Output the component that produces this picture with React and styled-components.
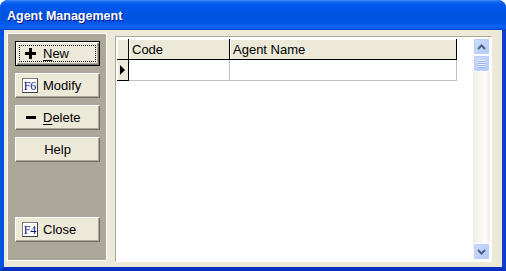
import React from 'react'
import styled, { createGlobalStyle } from 'styled-components'

const GlobalStyle = createGlobalStyle`
  body {
    margin: 0;
    background: #fff;
    font-family: "Liberation Sans", Arial, sans-serif;
  }
`

const Window = styled.div`
  width: 506px;
  height: 271px;
  display: flex;
  flex-direction: column;
  border-radius: 8px 8px 0 0;
  overflow: hidden;
  background: #0054e3;
`

const TitleBar = styled.div`
  height: 30px;
  flex: none;
  display: flex;
  align-items: center;
  padding: 1px 0 0 7px;
  box-sizing: border-box;
  color: #fff;
  font-family: "Liberation Sans", Arial, sans-serif;
  font-weight: bold;
  font-size: 12.5px;
  text-shadow: 1px 1px #0a1883;
  background: linear-gradient(
    to bottom,
    #3c8cf8 0%,
    #1a6af0 6%,
    #0058ee 14%,
    #0054e3 45%,
    #0055e8 75%,
    #0a63f0 88%,
    #0b5fe8 94%,
    #0046cf 100%
  );
`

const Frame = styled.div`
  flex: 1;
  display: flex;
  gap: 8px;
  background: #ece9d8;
  border-style: solid;
  border-width: 0 4px 4px 4px;
  border-color: #0046d8 #0b3fd0 #0a2fc2 #0052e0;
  padding: 3px 10px 5px 3px;
  min-height: 0;
`

const SidePanel = styled.div`
  width: 100px;
  box-sizing: border-box;
  flex: none;
  margin-bottom: 1px;
  background: #aca899;
  border: 1px solid #fff;
  display: flex;
  flex-direction: column;
  gap: 7px;
  padding: 7px 0 18px 7px;
`

const Button = styled.div`
  width: 85px;
  height: 25px;
  box-sizing: border-box;
  flex: none;
  display: flex;
  align-items: center;
  justify-content: ${({ $center }) => ($center ? 'center' : 'flex-start')};
  padding-left: ${({ $center }) => ($center ? '0' : '6px')};
  background: #ece9d8;
  color: #000;
  font-size: 13px;
  border: 1px solid;
  border-color: ${({ $default }) => ($default ? '#000' : '#fff #716f64 #716f64 #fff')};
  box-shadow: ${({ $default }) =>
    $default
      ? 'inset 1px 1px #fff, inset -1px -1px #716f64, inset -2px -2px #aca899'
      : 'inset -1px -1px #aca899'};
  margin-top: ${({ $bottom }) => ($bottom ? 'auto' : '0')};
  position: relative;
`

const FocusRing = styled.div`
  position: absolute;
  left: 3px;
  top: 3px;
  right: 3px;
  bottom: 3px;
  border: 1px dotted #000;
  pointer-events: none;
`

const IconSlot = styled.span`
  width: 16px;
  height: 16px;
  margin-right: 5px;
  display: flex;
  align-items: center;
  justify-content: center;
  flex: none;
`

const KeyCap = styled.span`
  width: 16px;
  height: 15px;
  box-sizing: border-box;
  margin-right: 5px;
  flex: none;
  display: flex;
  align-items: center;
  justify-content: center;
  background: #fff;
  border: 1px solid;
  border-color: #808080 #404040 #404040 #808080;
  color: #0a0a80;
  font-family: "Liberation Serif", "Times New Roman", serif;
  font-size: 12px;
  line-height: 1;
`

const Hot = styled.span`
  text-decoration: underline;
  text-underline-offset: 2px;
`

const GridBox = styled.div`
  flex: 1;
  margin-top: 3px;
  display: flex;
  box-sizing: border-box;
  background: #fff;
  border: 1px solid;
  border-color: #aca899 #fff #fff #aca899;
  padding: 1px;
  min-width: 0;
`

const GridArea = styled.div`
  flex: 1;
  display: flex;
  flex-direction: column;
  padding-top: 1px;
`

const HeaderRow = styled.div`
  display: flex;
  height: 21px;
`

const HeaderCell = styled.div`
  width: ${({ $w }) => $w}px;
  box-sizing: border-box;
  height: 21px;
  flex: none;
  background: #ece9d8;
  border-right: 1px solid #000;
  border-bottom: 1px solid #000;
  box-shadow: inset 1px 1px #fff;
  font-size: 13px;
  padding: 3px 0 0 3px;
  white-space: nowrap;
`

const DataRow = styled.div`
  display: flex;
  height: 21px;
`

const RowMarker = styled.div`
  width: 12px;
  box-sizing: border-box;
  flex: none;
  background: #ece9d8;
  border-right: 1px solid #000;
  border-bottom: 1px solid #000;
  box-shadow: inset 1px 0 #fff;
  display: flex;
  align-items: center;
  padding-left: 3px;

  &::before {
    content: '';
    border-style: solid;
    border-width: 5px 0 5px 5px;
    border-color: transparent transparent transparent #000;
  }
`

const DataCell = styled.div`
  width: ${({ $w }) => $w}px;
  box-sizing: border-box;
  flex: none;
  border-right: 1px solid #c0c0c0;
  border-bottom: 1px solid #c0c0c0;
`

const ScrollBar = styled.div`
  width: 17px;
  flex: none;
  display: flex;
  flex-direction: column;
  background: linear-gradient(to right, #eeede5 0%, #f3f1ec 20%, #fdfdfa 75%, #eeede5 100%);
`

const ScrollButton = styled.div`
  height: 17px;
  flex: none;
  box-sizing: border-box;
  border: 1px solid #fff;
  border-radius: 2px;
  background: linear-gradient(to bottom right, #cddcfc 0%, #c0d2fb 50%, #b4c8f6 100%);
  box-shadow: inset 0 0 0 1px #b9cdf7;
  display: flex;
  align-items: center;
  justify-content: center;
`

const Track = styled.div`
  flex: 1;
`

const Grip = styled.div`
  width: 7px;
  height: 8px;
  background: repeating-linear-gradient(
    to bottom,
    #eef4fe 0px,
    #eef4fe 1px,
    #8cb0f8 1px,
    #8cb0f8 2px
  );
`

const Chevron = ({ down }) => (
  <svg width="9" height="6" viewBox="0 0 9 6">
    <path
      d={down ? 'M1 1 L4.5 4.5 L8 1' : 'M1 5 L4.5 1.5 L8 5'}
      fill="none"
      stroke="#4d6185"
      strokeWidth="2"
    />
  </svg>
)

const PlusIcon = () => (
  <svg width="11" height="11" viewBox="0 0 11 11">
    <rect x="4" y="0" width="3" height="11" fill="#000" />
    <rect x="0" y="4" width="11" height="3" fill="#000" />
  </svg>
)

const MinusIcon = () => (
  <svg width="11" height="11" viewBox="0 0 11 11">
    <rect x="1" y="4" width="10" height="3" fill="#000" />
  </svg>
)

const columns = [
  { key: 'marker', w: 12, title: '' },
  { key: 'code', w: 101, title: 'Code' },
  { key: 'name', w: 227, title: 'Agent Name' },
]

export default function App() {
  return (
    <>
      <GlobalStyle />
      <Window>
        <TitleBar>Agent Management</TitleBar>
        <Frame>
          <SidePanel>
            <Button $default>
              <FocusRing />
              <IconSlot><PlusIcon /></IconSlot>
              <span><Hot>N</Hot>ew</span>
            </Button>
            <Button>
              <KeyCap>F6</KeyCap>
              <span>Modify</span>
            </Button>
            <Button>
              <IconSlot><MinusIcon /></IconSlot>
              <span><Hot>D</Hot>elete</span>
            </Button>
            <Button $center>Help</Button>
            <Button $bottom>
              <KeyCap>F4</KeyCap>
              <span>Close</span>
            </Button>
          </SidePanel>
          <GridBox>
            <GridArea>
              <HeaderRow>
                {columns.map(c => (
                  <HeaderCell key={c.key} $w={c.w}>{c.title}</HeaderCell>
                ))}
              </HeaderRow>
              <DataRow>
                <RowMarker />
                <DataCell $w={101} />
                <DataCell $w={227} />
              </DataRow>
            </GridArea>
            <ScrollBar>
              <ScrollButton><Chevron /></ScrollButton>
              <ScrollButton><Grip /></ScrollButton>
              <Track />
              <ScrollButton><Chevron down /></ScrollButton>
            </ScrollBar>
          </GridBox>
        </Frame>
      </Window>
    </>
  )
}
